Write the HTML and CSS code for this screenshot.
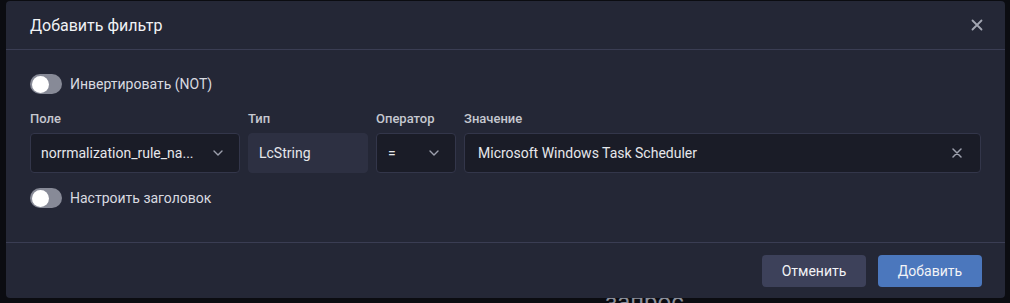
FILE: index.html
```html
<!DOCTYPE html>
<html lang="ru">
    <head>
        <meta charset="UTF-8">
        <meta name="viewport" content="width=device-width, initial-scale=1.0">
        <title>Добавить фильтр</title>
        <link rel="stylesheet" href="styles.css">
    </head>

    <body>
        <div class="backdrop-text">запрос</div>

        <div class="dialog">
            <div class="dialog-header">
                <span class="dialog-title">Добавить фильтр</span>
                <svg class="close-icon" width="12" height="12" viewBox="0 0 12 12">
                    <path d="M1.5 1.5l9 9M10.5 1.5l-9 9" stroke="currentColor" stroke-width="1.8" stroke-linecap="round"/>
                </svg>
            </div>

            <div class="dialog-body">
                <label class="switch-row">
                    <span class="switch"><span class="knob"></span></span>
                    <span class="switch-label">Инвертировать (NOT)</span>
                </label>

                <div class="fields">
                    <div class="field field-name">
                        <div class="field-label">Поле</div>
                        <div class="control">
                            <span class="control-text">norrmalization_rule_na...</span>
                            <svg class="chevron" width="10" height="6" viewBox="0 0 10 6">
                                <path d="M1 1l4 4 4-4" fill="none" stroke="currentColor" stroke-width="1.4" stroke-linecap="round" stroke-linejoin="round"/>
                            </svg>
                        </div>
                    </div>
                    <div class="field field-type">
                        <div class="field-label">Тип</div>
                        <div class="control control-disabled">
                            <span class="control-text">LcString</span>
                        </div>
                    </div>
                    <div class="field field-op">
                        <div class="field-label">Оператор</div>
                        <div class="control">
                            <span class="control-text">=</span>
                            <svg class="chevron" width="10" height="6" viewBox="0 0 10 6">
                                <path d="M1 1l4 4 4-4" fill="none" stroke="currentColor" stroke-width="1.4" stroke-linecap="round" stroke-linejoin="round"/>
                            </svg>
                        </div>
                    </div>
                    <div class="field field-value">
                        <div class="field-label">Значение</div>
                        <div class="control">
                            <span class="control-text">Microsoft Windows Task Scheduler</span>
                            <svg class="clear-icon" width="10" height="10" viewBox="0 0 10 10">
                                <path d="M1 1l8 8M9 1l-8 8" stroke="currentColor" stroke-width="1.5" stroke-linecap="round"/>
                            </svg>
                        </div>
                    </div>
                </div>

                <label class="switch-row">
                    <span class="switch"><span class="knob"></span></span>
                    <span class="switch-label">Настроить заголовок</span>
                </label>
            </div>

            <div class="dialog-footer">
                <button class="btn btn-secondary">Отменить</button>
                <button class="btn btn-primary">Добавить</button>
            </div>
        </div>
    </body>
</html>
```

FILE: styles.css
```css
body {
    margin: 0;
    background-color: #0b0c11;
    font-family: Roboto, 'Liberation Sans', sans-serif;
    color: #e4e5ea;
    height: 303px;
    overflow: hidden;
}

/* text of the page under the dialog, only its top is visible */
.backdrop-text {
    position: absolute;
    top: 290px;
    left: 605px;
    font-size: 24px;
    line-height: 24px;
    color: #8d909b;
}

.dialog {
    position: relative;
    margin: 1px 0 0 6px;
    width: 999px;
    height: 297px;
    background-color: #242736;
    border-radius: 4px;
    display: flex;
    flex-direction: column;
}

.dialog-header {
    height: 48px;
    padding: 0 22px 0 24px;
    display: flex;
    align-items: center;
    justify-content: space-between;
    border-bottom: 1px solid #3a3d53;
}

.dialog-title {
    font-size: 16px;
    color: #f1f2f5;
}

.close-icon {
    color: #a3a6b2;
}

.dialog-body {
    flex: 1;
    padding: 24px 24px 0;
}

.switch-row {
    display: flex;
    align-items: center;
    gap: 8px;
    height: 20px;
}

.switch {
    width: 32px;
    height: 20px;
    border-radius: 10px;
    background-color: #878a97;
    display: flex;
    align-items: center;
    padding-left: 2px;
    box-sizing: border-box;
}

.knob {
    width: 17px;
    height: 17px;
    border-radius: 50%;
    background-color: #ffffff;
}

.switch-label {
    font-size: 14px;
    color: #d9dae0;
}

.fields {
    display: flex;
    gap: 8px;
    margin: 17px 0 15px;
}

.field-label {
    font-size: 13px;
    line-height: 16px;
    font-weight: 500;
    color: #c6c8d0;
    margin-bottom: 6px;
}

.field-name { width: 210px; }
.field-type { width: 120px; }
.field-op { width: 80px; }
.field-value { flex: 1; }

.control {
    height: 40px;
    box-sizing: border-box;
    border: 1px solid #33364a;
    border-radius: 4px;
    background-color: #1a1c27;
    display: flex;
    align-items: center;
    justify-content: space-between;
    padding: 0 16px 0 10px;
}

.control-disabled {
    background-color: #2d3042;
    border-color: #2d3042;
}

.field-op .control { padding-left: 11px; }
.field-value .control { padding-left: 13px; padding-right: 18px; }

.control-text {
    font-size: 14px;
    color: #e6e7eb;
    white-space: nowrap;
}

.chevron,
.clear-icon {
    color: #9da0ad;
}

.dialog-footer {
    height: 56px;
    box-sizing: border-box;
    padding: 12px 23px 12px 0;
    border-top: 1px solid #3a3d53;
    display: flex;
    justify-content: flex-end;
    gap: 12px;
}

.btn {
    width: 104px;
    height: 32px;
    border: none;
    border-radius: 4px;
    font-family: Roboto, 'Liberation Sans', sans-serif;
    font-size: 14px;
    color: #f2f3f6;
    cursor: pointer;
}

.btn-secondary {
    background-color: #3d415a;
}

.btn-primary {
    background-color: #4b77bd;
}
```
